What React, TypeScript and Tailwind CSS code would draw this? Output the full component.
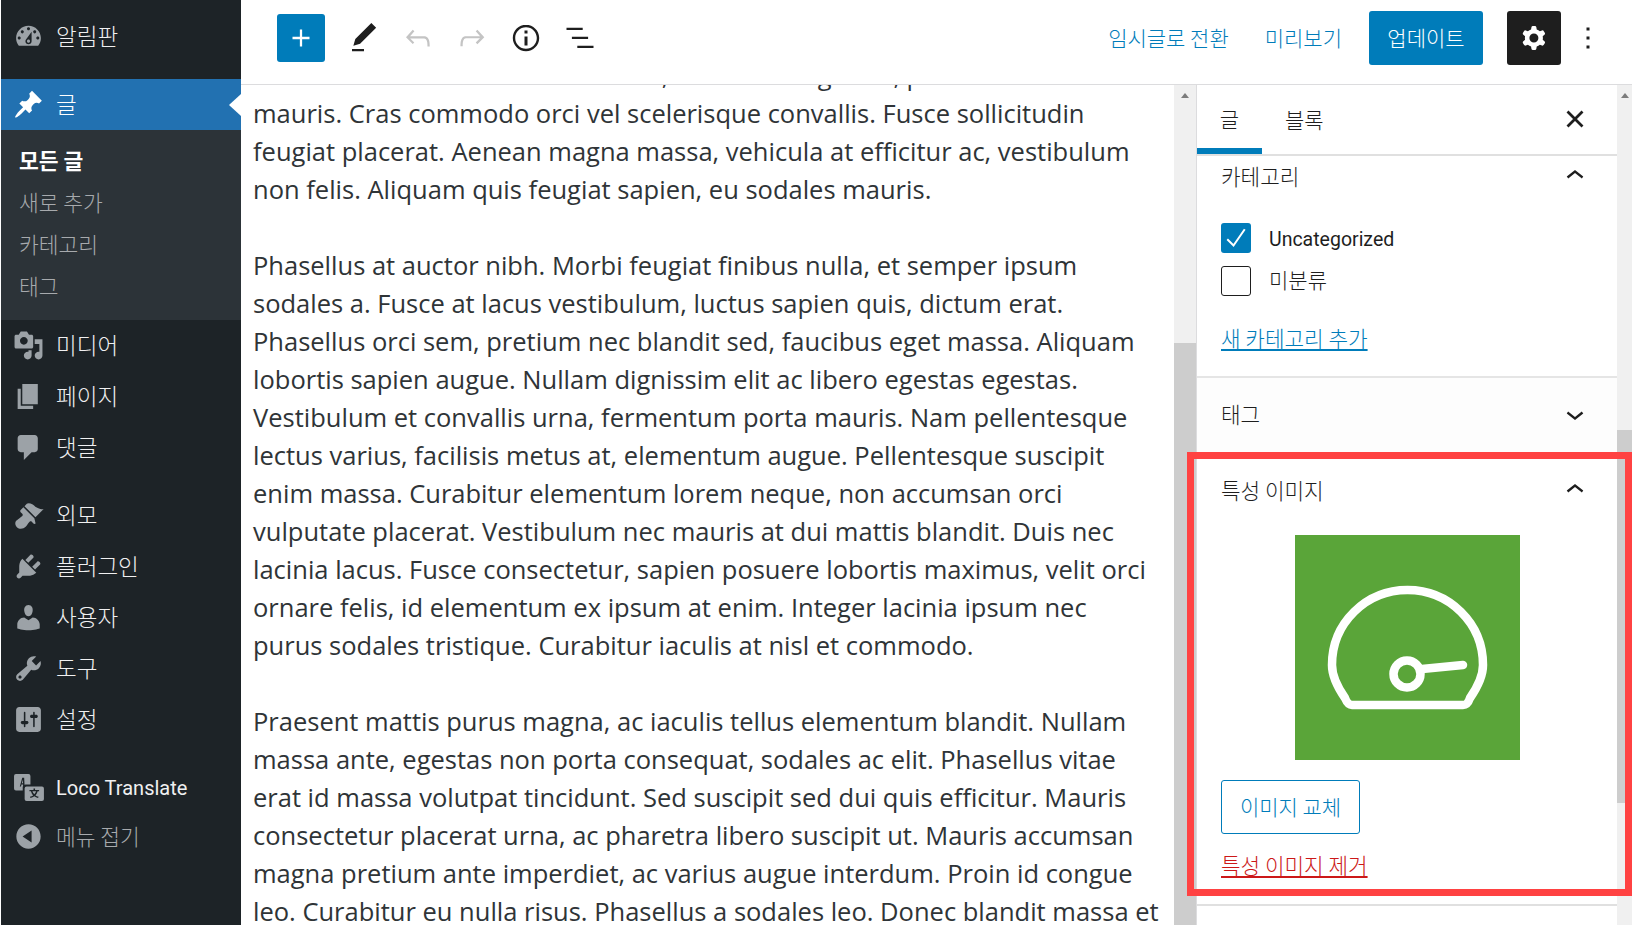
import React from "react";

const bodyFont = { fontFamily: '"Open Sans", "Noto Sans CJK KR", sans-serif' };
const latinUi = { fontFamily: 'Roboto, "Noto Sans CJK KR", sans-serif' };

const paragraphs = [
  [
    "Aenean non sem at lectus eleifend, nulla vitae egestas, posuere",
    "mauris. Cras commodo orci vel scelerisque convallis. Fusce sollicitudin",
    "feugiat placerat. Aenean magna massa, vehicula at efficitur ac, vestibulum",
    "non felis. Aliquam quis feugiat sapien, eu sodales mauris.",
  ],
  [
    "Phasellus at auctor nibh. Morbi feugiat finibus nulla, et semper ipsum",
    "sodales a. Fusce at lacus vestibulum, luctus sapien quis, dictum erat.",
    "Phasellus orci sem, pretium nec blandit sed, faucibus eget massa. Aliquam",
    "lobortis sapien augue. Nullam dignissim elit ac libero egestas egestas.",
    "Vestibulum et convallis urna, fermentum porta mauris. Nam pellentesque",
    "lectus varius, facilisis metus at, elementum augue. Pellentesque suscipit",
    "enim massa. Curabitur elementum lorem neque, non accumsan orci",
    "vulputate placerat. Vestibulum nec mauris at dui mattis blandit. Duis nec",
    "lacinia lacus. Fusce consectetur, sapien posuere lobortis maximus, velit orci",
    "ornare felis, id elementum ex ipsum at enim. Integer lacinia ipsum nec",
    "purus sodales tristique. Curabitur iaculis at nisl et commodo.",
  ],
  [
    "Praesent mattis purus magna, ac iaculis tellus elementum blandit. Nullam",
    "massa ante, egestas non porta consequat, sodales ac elit. Phasellus vitae",
    "erat id massa volutpat tincidunt. Sed suscipit sed dui quis efficitur. Mauris",
    "consectetur placerat urna, ac pharetra libero suscipit ut. Mauris accumsan",
    "magna pretium ante imperdiet, ac varius augue interdum. Proin id congue",
    "leo. Curabitur eu nulla risus. Phasellus a sodales leo. Donec blandit massa et",
  ],
];

const dash = {
  dashboard:
    "M3.76 16h12.48c1.1-1.37 1.76-3.11 1.76-5 0-4.42-3.58-8-8-8s-8 3.58-8 8c0 1.89.66 3.63 1.76 5zM10 4c.55 0 1 .45 1 1s-.45 1-1 1-1-.45-1-1 .45-1 1-1zM6 6c.55 0 1 .45 1 1s-.45 1-1 1-1-.45-1-1 .45-1 1-1zm8 0c.55 0 1 .45 1 1s-.45 1-1 1-1-.45-1-1 .45-1 1-1zm-5.37 5.55L12 7v6c0 1.1-.9 2-2 2s-2-.9-2-2c0-.57.24-1.08.63-1.45zM4 10c.55 0 1 .45 1 1s-.45 1-1 1-1-.45-1-1 .45-1 1-1zm12 0c.55 0 1 .45 1 1s-.45 1-1 1-1-.45-1-1 .45-1 1-1zm-5 3c0-.55-.45-1-1-1s-1 .45-1 1 .45 1 1 1 1-.45 1-1z",
  pin: "M10.44 3.02l1.82-1.82 6.36 6.35-1.83 1.82c-1.05-.68-2.48-.57-3.41.36l-.75.75c-.92.93-1.04 2.35-.35 3.41l-1.83 1.82-2.41-2.41-2.8 2.79c-.42.42-3.38 2.71-3.8 2.29s1.86-3.39 2.28-3.81l2.79-2.79L4.1 9.36l1.83-1.82c1.05.69 2.48.57 3.4-.36l.75-.75c.93-.92 1.05-2.35.36-3.41z",
  media:
    "M13 11V4c0-.55-.45-1-1-1h-1.67L9 1H5L3.67 3H2c-.55 0-1 .45-1 1v7c0 .55.45 1 1 1h10c.55 0 1-.45 1-1zM7 4.5c1.38 0 2.5 1.12 2.5 2.5S8.38 9.5 7 9.5 4.5 8.38 4.5 7 5.62 4.5 7 4.5zM14 6h5v10.5c0 1.38-1.12 2.5-2.5 2.5S14 17.88 14 16.5s1.12-2.5 2.5-2.5c.17 0 .34.02.5.05V9h-3V6zm-4 8.05V13h2v3.5c0 1.38-1.12 2.5-2.5 2.5S7 17.88 7 16.5 8.12 14 9.5 14c.17 0 .34.02.5.05z",
  page: "M6 15V2h10v13H6zm-1 1h8v2H3V5h2v11z",
  comment:
    "M5 2h9c1.1 0 2 .9 2 2v7c0 1.1-.9 2-2 2h-2l-5 5v-5H5c-1.1 0-2-.9-2-2V4c0-1.1.9-2 2-2z",
  brush:
    "M14.48 11.06L7.41 3.99l1.5-1.5c.5-.56 2.3-.47 3.51.32 1.21.8 1.43 1.28 2.91 2.1 1.18.64 2.45 1.26 4.45.85zm-.71.71L6.7 4.7 4.93 6.47c-.39.39-.39 1.02 0 1.41l1.06 1.06c.39.39.39 1.03 0 1.42-.6.6-1.43 1.11-2.21 1.69-.35.26-.7.53-1.01.84C1.43 13.23.78 15.78 2.53 17.53c1.75 1.75 4.3 1.1 5.64-.24.31-.31.58-.66.84-1.01.58-.78 1.09-1.61 1.69-2.21.39-.39 1.03-.39 1.42 0l1.06 1.06c.39.39 1.02.39 1.41 0z",
  plugin:
    "M13.11 4.36L9.87 7.6 8 5.73l3.24-3.24c.35-.34 1.05-.2 1.56.32.52.51.66 1.21.31 1.55zm-8 1.77l.91-1.12 9.01 9.01-1.19.84c-.71.71-2.63 1.16-3.82 1.16H6.14L4.9 17.26c-.59.59-1.54.59-2.12 0-.59-.58-.59-1.53 0-2.12l1.24-1.24v-3.88c0-1.13.4-3.19 1.09-3.89zm7.26 3.97l3.24-3.24c.34-.35 1.04-.21 1.55.31.52.51.66 1.21.31 1.55l-3.24 3.25z",
  users:
    "M10 9.25c-2.27 0-2.73-3.44-2.73-3.44C7 4.02 7.82 2 9.97 2c2.16 0 2.98 2.02 2.71 3.81 0 0-.41 3.44-2.68 3.44zm0 2.57L12.72 10c2.39 0 4.52 2.33 4.52 4.53v2.49s-3.65 1.13-7.24 1.13c-3.65 0-7.24-1.13-7.24-1.13v-2.49c0-2.25 1.94-4.48 4.47-4.48z",
  tools:
    "M16.68 9.77c-1.34 1.34-3.3 1.67-4.95.99l-5.41 6.52c-.99.99-2.59.99-3.58 0s-.99-2.59 0-3.57l6.52-5.42c-.68-1.65-.35-3.61.99-4.95 1.28-1.28 3.12-1.62 4.72-1.06l-2.89 2.89 2.82 2.82 2.86-2.87c.53 1.58.18 3.39-1.08 4.65zM3.81 16.21c.4.39 1.04.39 1.43 0 .4-.4.4-1.04 0-1.43-.39-.4-1.03-.4-1.43 0-.39.39-.39 1.03 0 1.43z",
  settings:
    "M18 16V4c0-1.1-.9-2-2-2H4c-1.1 0-2 .9-2 2v12c0 1.1.9 2 2 2h12c1.1 0 2-.9 2-2zM8 11h1c.55 0 1 .45 1 1s-.45 1-1 1H8v1.5c0 .28-.22.5-.5.5s-.5-.22-.5-.5V13H6c-.55 0-1-.45-1-1s.45-1 1-1h1V5.5c0-.28.22-.5.5-.5s.5.22.5.5V11zm5-2h-1c-.55 0-1-.45-1-1s.45-1 1-1h1V5.5c0-.28.22-.5.5-.5s.5.22.5.5V7h1c.55 0 1 .45 1 1s-.45 1-1 1h-1v5.5c0 .28-.22.5-.5.5s-.5-.22-.5-.5V9z",
  collapse:
    "M10 2.16c4.33 0 7.84 3.51 7.84 7.84s-3.51 7.84-7.84 7.84S2.16 14.33 2.16 10 5.71 2.16 10 2.16zm2 11.72V6.12L6.18 9.97z",
};

const wp = {
  plus: "M18 11.2h-5.2V6h-1.6v5.2H6v1.6h5.2V18h1.6v-5.2H18z",
  edit: "M20.1 5.1L16.9 2 6.2 12.7l-1.3 4.4 4.5-1.3L20.1 5.1zM4 20.8h8v-1.5H4v1.5z",
  undo: "M18.3 11.7c-.6-.6-1.4-.9-2.3-.9H6.7l2.9-3.3-1.1-1-4.5 5L8.5 16l1-1-2.7-2.7H16c.5 0 .9.2 1.3.5 1 1 1 3.4 1 4.5v.3h1.5v-.2c0-1.5 0-4.3-1.5-5.7z",
  redo: "M15.6 6.5l-1.1 1 2.9 3.3H8c-.9 0-1.7.3-2.3.9-1.4 1.5-1.4 4.2-1.4 5.6v.2h1.5v-.3c0-1.1 0-3.5 1-4.5.3-.3.7-.5 1.3-.5h9.2L14.5 15l1.1 1.1 4.6-4.6-4.6-5z",
  info: "M12 3.2c-4.8 0-8.8 3.9-8.8 8.8 0 4.8 3.9 8.8 8.8 8.8 4.8 0 8.8-3.9 8.8-8.8 0-4.8-4-8.8-8.8-8.8zm0 16c-4 0-7.2-3.3-7.2-7.2C4.8 8 8 4.8 12 4.8s7.2 3.3 7.2 7.2c0 4-3.2 7.2-7.2 7.2zM11 17h2v-6h-2v6zm0-8h2V7h-2v2z",
  list: "M13.8 5.2H3v1.5h10.8V5.2zm-3.6 12v1.5H21v-1.5H10.2zm7.2-6H6.6v1.5h10.8v-1.5z",
  cog: "M10.289 4.836A1 1 0 0 1 11.275 4h1.306a1 1 0 0 1 .987.836l.244 1.466c.787.26 1.503.679 2.108 1.218l1.393-.522a1 1 0 0 1 1.216.437l.653 1.13a1 1 0 0 1-.23 1.273l-1.148.944a6.025 6.025 0 0 1 0 2.435l1.149.946a1 1 0 0 1 .23 1.272l-.653 1.13a1 1 0 0 1-1.216.437l-1.394-.522c-.605.54-1.32.958-2.108 1.218l-.244 1.466a1 1 0 0 1-.987.836h-1.306a1 1 0 0 1-.986-.836l-.244-1.466a5.995 5.995 0 0 1-2.108-1.218l-1.394.522a1 1 0 0 1-1.217-.436l-.653-1.131a1 1 0 0 1 .23-1.272l1.149-.946a6.026 6.026 0 0 1 0-2.435l-1.148-.944a1 1 0 0 1-.23-1.272l.653-1.131a1 1 0 0 1 1.217-.437l1.393.522a5.994 5.994 0 0 1 2.108-1.218l.244-1.466zM14.929 12a3 3 0 1 1-6 0 3 3 0 0 1 6 0z",
  more: "M13 19h-2v-2h2v2zm0-6h-2v-2h2v2zm0-6h-2V5h2v2z",
  up: "M6.5 12.4L12 8l5.5 4.4-.9 1.2L12 10l-4.5 3.6-1-1.2z",
  down: "M17.5 11.6L12 16l-5.5-4.4.9-1.2L12 14l4.5-3.6 1 1.2z",
};

function Icon({ d, box = 24, className }: { d: string; box?: number; className?: string }) {
  return (
    <svg viewBox={`0 0 ${box} ${box}`} className={className} fill="currentColor">
      <path d={d} fillRule="evenodd" />
    </svg>
  );
}

function MenuItem({ icon, label }: { icon: string; label: string }) {
  return (
    <div className="flex items-center h-[51px]">
      <div className="w-[54px] flex justify-center shrink-0 text-[#9ca2a7]">
        <Icon d={icon} box={20} className="w-[31px] h-[31px]" />
      </div>
      <span className="ml-[1px] pb-[2px] text-[22.5px] font-light text-[#f0f0f1]">{label}</span>
    </div>
  );
}

function LocoIcon() {
  return (
    <svg viewBox="0 0 32 28" className="w-[31px] h-[27px] text-[#9ca2a7]" fill="currentColor">
      <path d="M3 0h13a2 2 0 0 1 2 2v9h-5a3 3 0 0 0-3 3v3H3a2 2 0 0 1-2-2V2a2 2 0 0 1 2-2z" />
      <path d="M7 13l2.5-9h2l.5 9h-1.500l-.1-2H8.700l-.5 2zM9 9.500h1.300l-.1-3.500z" fill="#1d2327" />
      <path d="M14 13h16a2 2 0 0 1 2 2v11a2 2 0 0 1-2 2H14a2 2 0 0 1-2-2V15a2 2 0 0 1 2-2z" />
      <path d="M21.200 15h1.600v1.500H27V18h-1.500c-.4 1.700-1.200 3.100-2.300 4.200.9.600 2 1.100 3.300 1.400l-.6 1.400c-1.500-.4-2.800-1-3.900-1.800-1.100.8-2.400 1.400-3.900 1.800l-.6-1.400c1.300-.3 2.400-.8 3.300-1.400-1.100-1.100-1.900-2.500-2.300-4.200H17v-1.500h4.200zM20.100 18c.3 1.200.9 2.200 1.900 3.100.9-.9 1.600-1.900 1.900-3.100z" fill="#1d2327" />
    </svg>
  );
}

function AdminMenu() {
  return (
    <aside className="w-[240px] ml-px shrink-0 bg-[#1d2327] h-full">
      <div className="pt-[11px] h-[79px]">
        <MenuItem icon={dash.dashboard} label="알림판" />
      </div>
      <div className="relative flex items-center h-[51px] bg-[#2271b1] text-white">
        <div className="w-[54px] flex justify-center shrink-0">
          <Icon d={dash.pin} box={20} className="w-[31px] h-[31px]" />
        </div>
        <span className="ml-[1px] pb-[2px] text-[22.5px] font-light">글</span>
        <div className="absolute right-0 top-[15px] w-0 h-0 border-y-[11px] border-y-transparent border-r-[12px] border-r-white" />
      </div>
      <div className="bg-[#2c3338] h-[190px] pt-[9px] text-[21.5px] text-[#a7aaad]">
        <div className="h-[42px] pl-[18px] flex items-center font-bold text-white">모든 글</div>
        <div className="h-[42px] pl-[18px] flex items-center font-light">새로 추가</div>
        <div className="h-[42px] pl-[18px] flex items-center font-light">카테고리</div>
        <div className="h-[42px] pl-[18px] flex items-center font-light">태그</div>
      </div>
      <MenuItem icon={dash.media} label="미디어" />
      <MenuItem icon={dash.page} label="페이지" />
      <MenuItem icon={dash.comment} label="댓글" />
      <div className="h-[17px]" />
      <MenuItem icon={dash.brush} label="외모" />
      <MenuItem icon={dash.plugin} label="플러그인" />
      <MenuItem icon={dash.users} label="사용자" />
      <MenuItem icon={dash.tools} label="도구" />
      <MenuItem icon={dash.settings} label="설정" />
      <div className="h-[17px]" />
      <div className="flex items-center h-[51px]">
        <div className="w-[54px] flex justify-center shrink-0">
          <LocoIcon />
        </div>
        <span className="ml-[1px] text-[20px] text-[#f0f0f1]" style={latinUi}>
          Loco Translate
        </span>
      </div>
      <div className="flex items-center h-[47px] text-[#a7aaad]">
        <div className="w-[54px] flex justify-center shrink-0 text-[#9ca2a7]">
          <Icon d={dash.collapse} box={20} className="w-[31px] h-[31px]" />
        </div>
        <span className="ml-[1px] text-[21.5px] font-light">메뉴 접기</span>
      </div>
    </aside>
  );
}

function TopBar() {
  return (
    <header className="h-[85px] pb-[8px] border-b border-[#dcdcde] flex items-center bg-white shrink-0">
      <button className="ml-[36px] w-[48px] h-[48px] rounded-[3px] bg-[#007cba] text-white flex items-center justify-center">
        <Icon d={wp.plus} className="w-[34px] h-[34px]" />
      </button>
      <div className="ml-[12px] flex items-center text-[#1e1e1e]">
        <div className="w-[54px] flex justify-center"><Icon d={wp.edit} className="w-[36px] h-[36px]" /></div>
        <div className="w-[54px] flex justify-center text-[#c4c4c4]"><Icon d={wp.undo} className="w-[36px] h-[36px]" /></div>
        <div className="w-[54px] flex justify-center text-[#c4c4c4]"><Icon d={wp.redo} className="w-[36px] h-[36px]" /></div>
        <div className="w-[54px] flex justify-center"><Icon d={wp.info} className="w-[36px] h-[36px]" /></div>
        <div className="w-[54px] flex justify-center"><Icon d={wp.list} className="w-[36px] h-[36px]" /></div>
      </div>
      <div className="ml-auto flex items-center text-[21px] font-light text-[#007cba]">
        <span>임시글로 전환</span>
        <span className="ml-[36px]">미리보기</span>
        <button className="ml-[27px] w-[114px] h-[54px] rounded-[3px] bg-[#007cba] text-white">업데이트</button>
        <button className="ml-[24px] w-[54px] h-[54px] rounded-[3px] bg-[#1e1e1e] text-white flex items-center justify-center">
          <Icon d={wp.cog} className="w-[36px] h-[36px]" />
        </button>
        <div className="w-[54px] flex justify-center text-[#1e1e1e]">
          <Icon d={wp.more} className="w-[36px] h-[36px]" />
        </div>
        <div className="w-[17px]" />
      </div>
    </header>
  );
}

function Editor() {
  return (
    <main className="flex-1 overflow-hidden pl-[12px] text-[25.5px] leading-[38px] text-[#2f3437]" style={bodyFont}>
      <div className="-mt-[29px]">
        {paragraphs.map((lines, i) => (
          <p key={i} className="mb-[38px] whitespace-nowrap">
            {lines.map((line) => (
              <span key={line} className="block">{line}</span>
            ))}
          </p>
        ))}
      </div>
    </main>
  );
}

function ScrollBar({ thumb, width }: { thumb: string; width: string }) {
  return (
    <div className={`relative shrink-0 bg-[#f0f0f0] ${width}`}>
      <div className={`absolute left-0 right-0 bg-[#cdcdcd] ${thumb}`} />
      <div className="absolute top-[8px] left-0 right-0 flex justify-center">
        <div className="w-0 h-0 border-x-[4px] border-x-transparent border-b-[5px] border-b-[#7c7c7c]" />
      </div>
    </div>
  );
}

function Section({ title, open, className = "", children }: { title: string; open: boolean; className?: string; children?: React.ReactNode }) {
  return (
    <div className={`px-[24px] ${className}`}>
      <div className="flex items-center justify-between h-[24px] text-[21.3px] font-light text-[#1e1e1e]">
        <span>{title}</span>
        <Icon d={open ? wp.up : wp.down} className="w-[36px] h-[36px] text-[#1e1e1e]" />
      </div>
      {children}
    </div>
  );
}

function SettingsPanel() {
  return (
    <section className="w-[421px] shrink-0 border-l border-[#dcdcde] bg-white overflow-hidden text-[#1e1e1e] font-light">
      <div className="h-[71px] border-b-2 border-[#e0e0e0] flex">
        <div className="w-[65px] h-full border-b-[6px] border-[#007cba] flex items-center justify-center text-[21px] pt-[5px]">글</div>
        <div className="ml-[23px] h-full flex items-center text-[21px]">블록</div>
        <div className="ml-auto mr-[27px] flex items-center pb-[2px]">
          <svg viewBox="0 0 24 24" className="w-[30px] h-[30px]" fill="none" stroke="currentColor" strokeWidth="2.2">
            <path d="M6 6l12 12M18 6L6 18" />
          </svg>
        </div>
      </div>
      <Section title="카테고리" open className="h-[222px] pt-[8px] border-b-2 border-[#e5e5e5]">
        <div className="mt-[35px] flex items-center h-[30px]">
          <div className="w-[30px] h-[30px] rounded-[3px] bg-[#007cba] text-white flex items-center justify-center">
            <svg viewBox="0 0 24 24" className="w-[30px] h-[30px]" fill="none" stroke="currentColor" strokeWidth="1.6">
              <path d="M5 13l5 5 9-13" />
            </svg>
          </div>
          <span className="ml-[18px] pt-[3px] text-[19.5px] font-normal" style={latinUi}>Uncategorized</span>
        </div>
        <div className="mt-[13px] flex items-center h-[30px]">
          <div className="w-[30px] h-[30px] rounded-[3px] border border-[#1e1e1e]" />
          <span className="ml-[18px] pb-[2px] text-[21px]">미분류</span>
        </div>
        <div className="mt-[27px] text-[21.3px] leading-[30px] text-[#007cba] underline">새 카테고리 추가</div>
      </Section>
      <Section title="태그" open={false} className="h-[78px] pt-[24px] bg-[#fdfdfd]" />
      <Section title="특성 이미지" open className="h-[450px] pt-[22px] border-b-2 border-[#e0e0e0]">
        <div className="mt-[33px] flex justify-center">
          <div className="w-[225px] h-[225px] bg-[#5aa539]">
            <svg viewBox="0 0 225 225" className="w-[225px] h-[225px]" fill="none" stroke="white" strokeWidth="8.500" strokeLinecap="round" strokeLinejoin="round">
              <path d="M50 163C41 150 37 140 37 130C37 88 71 55 112.500 55S188 88 188 130C188 140 184 150 175 163C173 169 171 170 168 170H57C54 170 52 168 50 163z" />
              <circle cx="112" cy="139" r="13.500" />
              <path d="M127 134l41-4" />
            </svg>
          </div>
        </div>
        <button className="mt-[20px] block w-[139px] h-[54px] rounded-[3px] border border-[#007cba] text-[#007cba] text-[21px]">이미지 교체</button>
        <div className="mt-[16px] text-[21.3px] leading-[30px] text-[#cc1818] underline">특성 이미지 제거</div>
      </Section>
    </section>
  );
}

export default function App() {
  return (
    <div className="relative w-[1632px] h-[925px] overflow-hidden flex bg-white" style={{ fontFamily: '"Noto Sans CJK KR", "Noto Sans", sans-serif' }}>
      <AdminMenu />
      <div className="flex-1 flex flex-col min-w-0">
        <TopBar />
        <div className="flex-1 flex min-h-0">
          <Editor />
          <ScrollBar width="w-[22px]" thumb="top-[258px] bottom-0" />
          <SettingsPanel />
          <ScrollBar width="w-[15px]" thumb="top-[345px] h-[373px]" />
        </div>
      </div>
      <div className="absolute left-[1187px] top-[452px] w-[445px] h-[444px] border-[7px] border-[#ff4242] pointer-events-none" />
    </div>
  );
}
